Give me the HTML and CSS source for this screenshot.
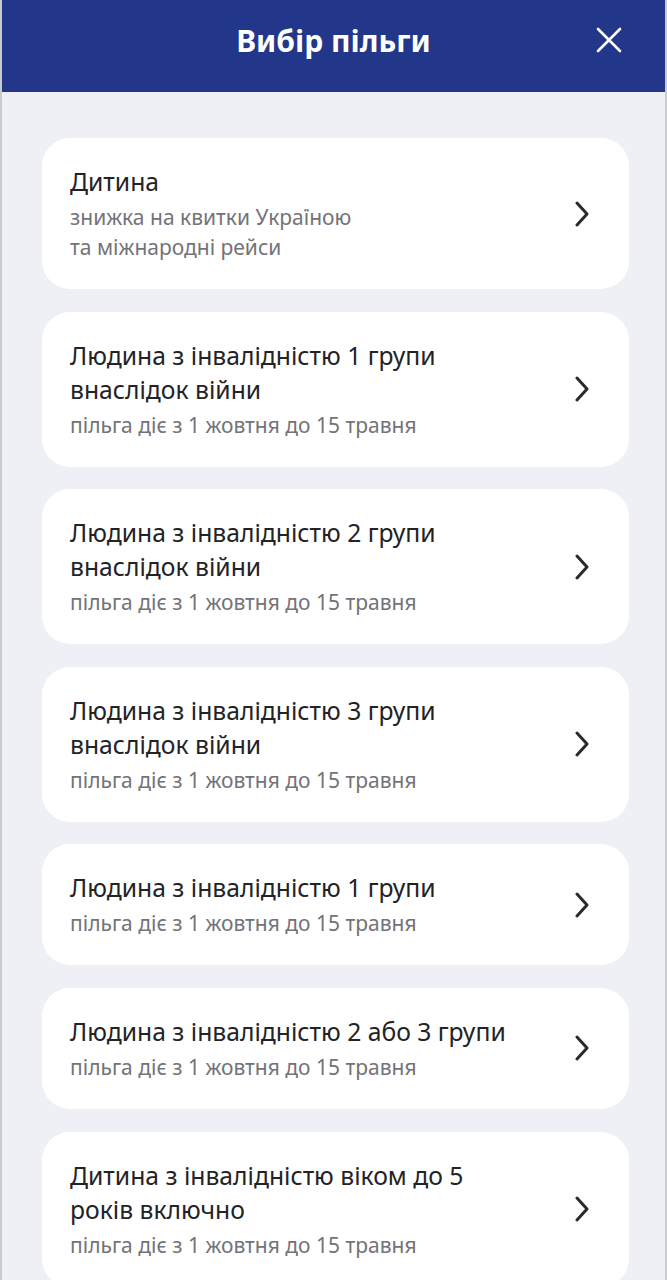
FILE: index.html
```html
<!DOCTYPE html>
<html lang="uk">
<head>
<meta charset="utf-8">
<link rel="stylesheet" href="styles.css">
</head>
<body>
<div class="screen">
  <header class="topbar">
    <h1 class="title">Вибір пільги</h1>
    <button class="close" aria-label="Закрити">
      <svg width="26" height="26" viewBox="0 0 26 26"><path d="M2 2 L24 24 M24 2 L2 24" stroke="#fff" stroke-width="2.6" stroke-linecap="round" fill="none"/></svg>
    </button>
  </header>
  <main class="list">
    <a class="card">
      <div class="text">
        <div class="name">Дитина</div>
        <div class="sub">знижка на квитки Україною<br>та міжнародні рейси</div>
      </div>
      <svg class="chev" width="16" height="26" viewBox="0 0 16 26"><path d="M3 2 L13 13 L3 24" stroke="#2a2a2d" stroke-width="3" stroke-linecap="round" stroke-linejoin="round" fill="none"/></svg>
    </a>
    <a class="card">
      <div class="text">
        <div class="name">Людина з інвалідністю 1 групи<br>внаслідок війни</div>
        <div class="sub">пільга діє з 1 жовтня до 15 травня</div>
      </div>
      <svg class="chev" width="16" height="26" viewBox="0 0 16 26"><path d="M3 2 L13 13 L3 24" stroke="#2a2a2d" stroke-width="3" stroke-linecap="round" stroke-linejoin="round" fill="none"/></svg>
    </a>
    <a class="card">
      <div class="text">
        <div class="name">Людина з інвалідністю 2 групи<br>внаслідок війни</div>
        <div class="sub">пільга діє з 1 жовтня до 15 травня</div>
      </div>
      <svg class="chev" width="16" height="26" viewBox="0 0 16 26"><path d="M3 2 L13 13 L3 24" stroke="#2a2a2d" stroke-width="3" stroke-linecap="round" stroke-linejoin="round" fill="none"/></svg>
    </a>
    <a class="card">
      <div class="text">
        <div class="name">Людина з інвалідністю 3 групи<br>внаслідок війни</div>
        <div class="sub">пільга діє з 1 жовтня до 15 травня</div>
      </div>
      <svg class="chev" width="16" height="26" viewBox="0 0 16 26"><path d="M3 2 L13 13 L3 24" stroke="#2a2a2d" stroke-width="3" stroke-linecap="round" stroke-linejoin="round" fill="none"/></svg>
    </a>
    <a class="card">
      <div class="text">
        <div class="name">Людина з інвалідністю 1 групи</div>
        <div class="sub">пільга діє з 1 жовтня до 15 травня</div>
      </div>
      <svg class="chev" width="16" height="26" viewBox="0 0 16 26"><path d="M3 2 L13 13 L3 24" stroke="#2a2a2d" stroke-width="3" stroke-linecap="round" stroke-linejoin="round" fill="none"/></svg>
    </a>
    <a class="card">
      <div class="text">
        <div class="name">Людина з інвалідністю 2 або 3 групи</div>
        <div class="sub">пільга діє з 1 жовтня до 15 травня</div>
      </div>
      <svg class="chev" width="16" height="26" viewBox="0 0 16 26"><path d="M3 2 L13 13 L3 24" stroke="#2a2a2d" stroke-width="3" stroke-linecap="round" stroke-linejoin="round" fill="none"/></svg>
    </a>
    <a class="card">
      <div class="text">
        <div class="name">Дитина з інвалідністю віком до 5<br>років включно</div>
        <div class="sub">пільга діє з 1 жовтня до 15 травня</div>
      </div>
      <svg class="chev" width="16" height="26" viewBox="0 0 16 26"><path d="M3 2 L13 13 L3 24" stroke="#2a2a2d" stroke-width="3" stroke-linecap="round" stroke-linejoin="round" fill="none"/></svg>
    </a>
  </main>
</div>
</body>
</html>
```

FILE: styles.css
```css
* { box-sizing: border-box; }
html, body {
  margin: 0;
  padding: 0;
  background: #eef0f5;
}
body {
  font-family: "Noto Sans", "Open Sans", sans-serif;
  color: #222226;
}
.screen {
  width: 667px;
  min-height: 1280px;
  background: #eef0f5;
  border-left: 2px solid #c9cbd1;
  border-right: 2px solid #c9cbd1;
}
.topbar {
  height: 92px;
  background: #22378a;
  display: flex;
  align-items: center;
  justify-content: center;
  position: relative;
}
.title {
  margin: 0 0 12px;
  color: #fff;
  font-size: 30px;
  font-weight: 700;
  letter-spacing: 0;
}
.close {
  position: absolute;
  right: 43px;
  top: 27px;
  background: none;
  border: 0;
  padding: 0;
  width: 26px;
  height: 26px;
  display: block;
}
.close svg { display: block; }
.list {
  padding: 46px 36px 0 40px;
  display: flex;
  flex-direction: column;
  gap: 22.6px;
}
.card {
  background: #fff;
  border-radius: 28px;
  padding: 27px 28px;
  display: flex;
  align-items: center;
  justify-content: space-between;
  text-decoration: none;
  color: inherit;
}
.name {
  font-size: 24.7px;
  line-height: 34px;
  color: #232326;
}
.sub {
  margin-top: 3px;
  font-size: 21px;
  line-height: 30px;
  color: #737378;
}
.chev {
  flex: none;
  margin-right: 11px;
  display: block;
}
```
